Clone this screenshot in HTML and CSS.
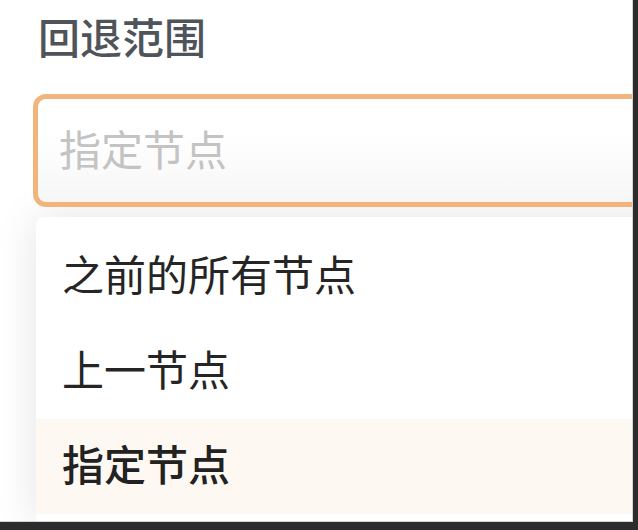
FILE: index.html
```html
<!DOCTYPE html>
<html lang="zh-CN">
<head>
<meta charset="utf-8">
<title>回退范围</title>
<link rel="stylesheet" href="styles.css">
</head>
<body>
<div class="screen">
  <div class="field-label">回退范围</div>
  <div class="select-input">
    <span class="placeholder">指定节点</span>
  </div>
  <ul class="dropdown">
    <li class="option">之前的所有节点</li>
    <li class="option">上一节点</li>
    <li class="option option-selected">指定节点</li>
  </ul>
</div>
</body>
</html>
```
FILE: styles.css
```css
html, body {
  margin: 0;
  padding: 0;
}

body {
  background: #2c2c2c;
  width: 638px;
  height: 530px;
  overflow: hidden;
  font-family: "Noto Sans CJK SC", "Noto Sans", sans-serif;
}

.screen {
  width: 632px;
  height: 521px;
  background: #ffffff;
  border-right: 1px solid #d4d4d4;
  border-bottom: 1px solid #d4d4d4;
  overflow: hidden;
  display: flex;
  flex-direction: column;
  align-items: flex-start;
}

.field-label {
  margin: 15px 0 0 38px;
  font-size: 42px;
  line-height: 42px;
  font-weight: 500;
  color: #4f545b;
}

.select-input {
  position: relative;
  z-index: 1;
  box-sizing: border-box;
  margin: 37px 0 0 33px;
  width: 660px;
  height: 113px;
  flex-shrink: 0;
  border: 5px solid #f0b47c;
  border-radius: 13px;
  background: linear-gradient(#ffffff 35%, #f6f6f6 100%);
  display: flex;
  align-items: center;
  padding: 0 0 6px 21px;
}

.placeholder {
  font-size: 42px;
  line-height: 42px;
  color: #c3c3c3;
}

.dropdown {
  list-style: none;
  margin: 10px 0 0 36px;
  padding: 12px 0 10px;
  width: 660px;
  flex-shrink: 0;
  background: #ffffff;
  border-radius: 8px;
  box-shadow: 0 0 44px rgba(0, 0, 0, 0.11);
}

.option {
  box-sizing: border-box;
  height: 95px;
  display: flex;
  align-items: center;
  padding: 0 0 8px 26px;
  font-size: 42px;
  line-height: 42px;
  color: #252525;
}

.option-selected {
  background: #fdf8f1;
  font-weight: 500;
  color: #222222;
}
```
